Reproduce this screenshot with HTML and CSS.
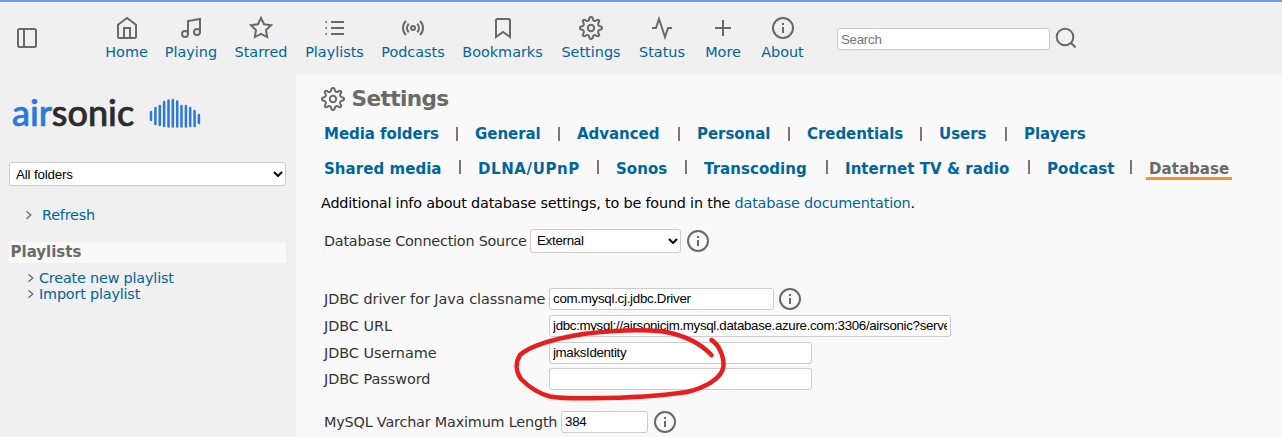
FILE: index.html
```html
<!DOCTYPE html>
<html lang="en">
<head>
<meta charset="utf-8">
<title>Airsonic</title>
<link rel="stylesheet" href="styles.css">
</head>
<body>
<svg width="0" height="0" class="sprite">
  <symbol id="gear" viewBox="0 0 24 24"><circle cx="12" cy="12" r="3.200"/><path d="M10.200 3.200Q10.300 1 12 1t1.800 2.200c.3 1.500 2 2.200 3.300 1.400Q18.800 3.200 19.800 4.200t-.4 2.700c-.8 1.300-.1 3 1.400 3.300Q23 10.300 23 12t-2.200 1.800c-1.500.3-2.200 2-1.400 3.300Q20.800 18.800 19.800 19.800t-2.700-.4c-1.300-.8-3-.1-3.300 1.400Q13.700 23 12 23t-1.800-2.200c-.3-1.500-2-2.200-3.300-1.400Q5.200 20.800 4.200 19.800t.4-2.700c.8-1.300.1-3-1.400-3.300Q1 13.700 1 12t2.200-1.800c1.500-.3 2.200-2 1.400-3.300Q3.200 5.200 4.200 4.200t2.700.4c1.300.8 3 .1 3.300-1.400Z"/></symbol>
  <symbol id="info" viewBox="0 0 24 24"><circle cx="12" cy="12" r="10"/><path d="M12 11v6M12 7v2"/></symbol>
  <symbol id="chev" viewBox="0 0 8 10"><path d="M1.500 1.300 5.800 5 1.500 8.700"/></symbol>
</svg>
<header class="topbar">
  <svg class="icon toggle" viewBox="0 0 24 24"><rect x="3" y="3" width="18" height="18" rx="1.500"/><path d="M9 3v18"/></svg>
  <nav class="nav">
    <a><svg class="icon" viewBox="0 0 24 24"><path d="M3 8.800 12 2l9 6.800V20.500q0 1.500-1.500 1.500h-15Q3 22 3 20.500zM9 22V12h6v10"/></svg><span class="lbl">Home</span></a>
    <a><svg class="icon" viewBox="0 0 24 24"><path d="M9 18V5l12-2v13"/><circle cx="6" cy="18" r="3"/><circle cx="18" cy="16" r="3"/></svg><span class="lbl">Playing</span></a>
    <a><svg class="icon" viewBox="0 0 24 24"><path d="m12 2 3.090 6.260L22 9.270l-5 4.870 1.180 6.880L12 17.770l-6.180 3.250L7 14.140 2 9.270l6.910-1.010z"/></svg><span class="lbl">Starred</span></a>
    <a><svg class="icon" viewBox="0 0 24 24"><path d="M8 6h13M8 12h13M8 18h13M2.500 6h1.500M2.500 12h1.500M2.500 18h1.500"/></svg><span class="lbl">Playlists</span></a>
    <a><svg class="icon" viewBox="0 0 24 24"><circle cx="12" cy="12" r="2"/><path d="M16.240 7.760a6 6 0 0 1 0 8.490M7.760 16.240a6 6 0 0 1 0-8.490M19.070 4.930a10 10 0 0 1 0 14.140M4.930 19.070a10 10 0 0 1 0-14.140"/></svg><span class="lbl">Podcasts</span></a>
    <a><svg class="icon" viewBox="0 0 24 24"><path d="m19 21-7-5-7 5V4.500Q5 3 6.500 3h11Q19 3 19 4.500z"/></svg><span class="lbl">Bookmarks</span></a>
    <a><svg class="icon"><use href="#gear"/></svg><span class="lbl">Settings</span></a>
    <a><svg class="icon" viewBox="0 0 24 24"><path d="M22 12h-4l-3 9L9 3l-3 9H2"/></svg><span class="lbl">Status</span></a>
    <a><svg class="icon" viewBox="0 0 24 24"><path d="M12 4v16M4 12h16"/></svg><span class="lbl">More</span></a>
    <a><svg class="icon"><use href="#info"/></svg><span class="lbl">About</span></a>
  </nav>
  <input class="field search" placeholder="Search">
  <svg class="icon" viewBox="0 0 24 24"><circle cx="11" cy="11" r="8.300"/><path d="m16.800 16.800 4.700 4.700"/></svg>
</header>
<div class="body">
  <aside class="sidebar">
    <div class="logo">
      <span class="word"><b>air</b>sonic</span>
      <svg class="wave" width="54" height="32" viewBox="0 0 54 32"><path d="M2 14v8M6.400 10v16M10.800 8v19M15.100 4v24M19.500 2.500v26M23.800 2v26.500M28.200 3.500v25M32.500 8v20.500M36.900 8v20.500M41.200 10v18M45.600 13v15M49.900 17v8"/></svg>
    </div>
    <div class="field select folders"><span>All folders</span><svg class="arrow" viewBox="0 0 10 6"><path d="M1 1l4 4 4-4"/></svg></div>
    <a class="refresh"><svg class="chev"><use href="#chev"/></svg><span>Refresh</span></a>
    <h2 class="heading"><span>Playlists</span></h2>
    <a class="item"><svg class="chev"><use href="#chev"/></svg><span>Create new playlist</span></a>
    <a class="item"><svg class="chev"><use href="#chev"/></svg><span>Import playlist</span></a>
  </aside>
  <main class="main">
    <h1 class="title"><svg class="icon"><use href="#gear"/></svg><span>Settings</span></h1>
    <div class="tabs first"><a><span>Media folders</span></a><a><span>General</span></a><a><span>Advanced</span></a><a><span>Personal</span></a><a><span>Credentials</span></a><a><span>Users</span></a><a><span>Players</span></a></div>
    <div class="tabs second"><a><span>Shared media</span></a><a class="wide"><span>DLNA/UPnP</span></a><a><span>Sonos</span></a><a><span>Transcoding</span></a><a><span>Internet TV &amp; radio</span></a><a><span>Podcast</span></a><a class="current"><span>Database</span></a></div>
    <p class="note"><span>Additional info about database settings, to be found in the <a>database documentation</a>.</span></p>
    <div class="row source"><label>Database Connection Source</label><div class="field select external"><span>External</span><svg class="arrow" viewBox="0 0 10 6"><path d="M1 1l4 4 4-4"/></svg></div><svg class="icon"><use href="#info"/></svg></div>
    <div class="jdbc">
      <div class="row"><label>JDBC driver for Java classname</label><input class="field driver" value="com.mysql.cj.jdbc.Driver"><svg class="icon"><use href="#info"/></svg></div>
      <div class="row"><label>JDBC URL</label><input class="field url" value="jdbc:mysql://airsonicjm.mysql.database.azure.com:3306/airsonic?serverTimezone=UTC"></div>
      <div class="row"><label>JDBC Username</label><input class="field cred" value="jmaksIdentity"></div>
      <div class="row"><label>JDBC Password</label><input class="field cred"></div>
    </div>
    <div class="row varchar"><label>MySQL Varchar Maximum Length</label><input class="field length" value="384"><svg class="icon"><use href="#info"/></svg></div>
  </main>
</div>
<svg class="marker" width="1282" height="437"><path d="M711.500 355C703 346 690 336 663 331.500C640 329 615 330 583 334C565 337 533 343 520 355C515 363 516 372 521 379C529 387 540 394 550 396.500C560 398.500 572 398.500 590 398.300C620 398 655 397 687 392C704 388 722 379 723.500 366C724 355 718 344 711.500 340"/></svg>
</body>
</html>
```

FILE: styles.css
```css
* { box-sizing: border-box; }
body { margin: 0; width: 1282px; height: 437px; overflow: hidden; background: #f0f0f0; font: 14.4px/16px "DejaVu Sans", sans-serif; color: #333; }
a { color: #00659c; white-space: nowrap; }
.sprite { display: block; }
svg { fill: none; stroke: #696969; stroke-width: 2; flex: none; }
.icon { width: 24px; height: 24px; }
.topbar { height: 74px; border-top: 2px solid #7098e8; display: flex; align-items: center; padding: 0 0 0 15px; }
.toggle { margin: 0 58px 0 0; }
.nav { display: grid; grid-template-columns: 59px 70px 70px 77px 80px 99px 78px 64px 58px 61px; align-self: flex-start; margin: 14px 24px 0 0; }
.nav a { display: flex; flex-direction: column; align-items: center; gap: 3px; line-height: 18px; }
.field { height: 22px; border: 1px solid #ccc; border-radius: 3px; background: #fff; font: 13.33px "Liberation Sans", Arial, sans-serif; color: #000; padding: 0 3px; outline: none; letter-spacing: -0.28px; }
.search { width: 213px; margin: 2px 4px 0 0; }
.search::placeholder { color: #757575; }
.body { display: flex; height: 363px; }
.sidebar { width: 296px; padding: 18px 10px 0 9px; display: flex; flex-direction: column; }
.logo { display: flex; height: 45px; padding-left: 3px; align-items: flex-start; }
.word { width: 137px; margin-top: -1.5px; font: 500 36px/42px Lato, sans-serif; color: #2b2b2b; -webkit-text-stroke: 0.7px; }
.word b { font-weight: 500; color: #2c77dc; }
.wave { margin-top: 5.5px; stroke: #2c77dc; stroke-width: 2.5; stroke-linecap: round; }
.select { display: flex; align-items: center; justify-content: space-between; padding: 0 2px 0 6px; height: 24px; }
.arrow { width: 10px; height: 6px; stroke: #000; }
.folders { margin-top: 25px; }
.folders span { letter-spacing: -0.15px; }
.chev { width: 8px; height: 10px; stroke-width: 1.3; }
.refresh { display: flex; align-items: center; margin: 21px 0 0 16px; gap: 9px; letter-spacing: -0.2px; }
.heading { margin: 19px 0 7px; height: 21px; padding-left: 1.5px; background: #f9f9f9; color: #696969; font: bold 15px/21px "DejaVu Sans", sans-serif; }
.item { display: flex; align-items: center; padding-left: 18px; gap: 4px; letter-spacing: -0.19px; }
.main { flex: 1; background: #f9f9f9; padding: 10px 0 0 25px; }
.title { display: flex; align-items: center; gap: 6.5px; height: 30px; margin: 0; color: #696969; font: bold 21.600px/30px "DejaVu Sans", sans-serif; letter-spacing: -0.6px; }
.tabs { display: grid; height: 35px; padding-left: 3px; font-weight: bold; font-size: 15px; line-height: 40px; }
.first { grid-template-columns: 151px 102px 120px 110px 132px 85px 90px; letter-spacing: -0.05px; }
.second { grid-template-columns: 154px 138px 88px 141px 202px 102px 100px; letter-spacing: 0.05px; }
.second .wide { letter-spacing: 0.6px; }
.tabs a { display: flex; justify-content: space-between; }
.tabs a:not(:last-child)::after { content: ""; width: 2px; height: 14px; margin: 13px 17px 0 0; background: #7d7478; }
.second a:not(:last-child)::after { margin-top: 11px; }
.tabs .current { color: #696969; justify-content: flex-start; }
.current span { height: 31px; margin-left: -3px; padding: 0 3px; border-bottom: 3px solid #f98f2c; }
.note { margin: 11px 0 0; color: #000; white-space: nowrap; letter-spacing: -0.2px; }
.row { display: flex; align-items: center; height: 27px; }
.row label { white-space: nowrap; }
.row .icon { margin-left: 5px; }
.source { margin-top: 16px; padding-left: 3px; }
.source label { width: 206px; letter-spacing: -0.23px; }
.external { width: 151px; }
.jdbc { margin: 31px 0 0 3px; }
.jdbc .row:last-child { height: 26px; }
.jdbc label { width: 225px; letter-spacing: -0.03px; }
.jdbc .icon { margin-left: 4px; }
.driver { width: 225px; }
.url { width: 402px; letter-spacing: -0.33px; }
.cred { width: 263px; letter-spacing: -0.35px; }
.varchar { margin-top: 16px; padding-left: 3px; }
.varchar label { width: 237px; letter-spacing: -0.19px; }
.length { width: 87px; }
.marker { position: absolute; left: 0; top: 0; stroke: #e71e1e; stroke-width: 4.500; stroke-linecap: round; stroke-linejoin: round; pointer-events: none; }
```
